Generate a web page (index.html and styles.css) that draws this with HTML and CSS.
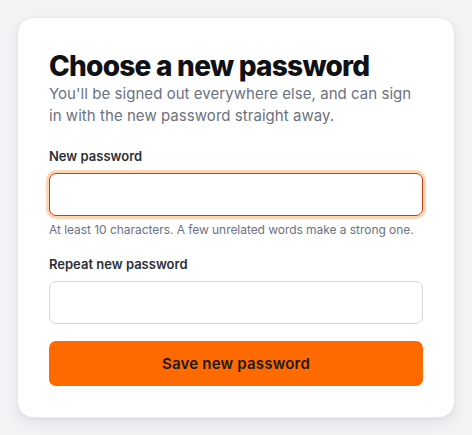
FILE: index.html
```html
<!DOCTYPE html>
<html lang="en">
<head>
<meta charset="utf-8">
<title>Choose a new password</title>
<link rel="stylesheet" href="styles.css">
</head>
<body>
<main class="page">
  <form class="card">
    <header class="head">
      <h1 class="title">Choose a new password</h1>
      <p class="lede">You'll be signed out everywhere else, and can sign in with the new password straight away.</p>
    </header>
    <div class="field">
      <label class="label" for="pw">New password</label>
      <input class="input input-focus" id="pw" type="password">
      <p class="hint">At least 10 characters. A few unrelated words make a strong one.</p>
    </div>
    <div class="field">
      <label class="label" for="pw2">Repeat new password</label>
      <input class="input" id="pw2" type="password">
    </div>
    <button class="btn" type="button">Save new password</button>
  </form>
</main>
</body>
</html>
```

FILE: styles.css
```css
* { box-sizing: border-box; }
html, body { margin: 0; padding: 0; }
body {
  background: #f3f4f6;
  font-family: Inter, "Noto Sans", sans-serif;
  color: #111827;
}
.page {
  padding: 17px;
}
.card {
  width: 438px;
  background: #ffffff;
  border: 1px solid #e8e9ed;
  border-radius: 16px;
  box-shadow: 0 6px 16px rgba(17, 24, 39, 0.08), 0 1px 3px rgba(17, 24, 39, 0.05);
  padding: 31px;
  display: flex;
  flex-direction: column;
}
.head { margin-bottom: 20px; }
.title {
  margin: 0;
  font-size: 28px;
  line-height: 34px;
  font-weight: 800;
  letter-spacing: -0.75px;
  color: #0f1115;
}
.lede {
  margin: 0;
  font-size: 15px;
  line-height: 22px;
  letter-spacing: 0.05px;
  color: #6b7280;
}
.field {
  display: flex;
  flex-direction: column;
  margin-bottom: 17px;
}
.label {
  font-size: 13px;
  line-height: 18px;
  font-weight: 600;
  color: #2b2f36;
  margin-bottom: 8px;
}
.input {
  height: 43px;
  border: 1px solid #d4d5dc;
  border-radius: 7px;
  background: #fff;
  font: inherit;
  padding: 0 12px;
  outline: none;
}
.input-focus {
  border-color: #c2410c;
  box-shadow: 0 0 0 3px #fdd6b6;
}
.hint {
  margin: 6px 0 0;
  font-size: 12px;
  line-height: 16px;
  letter-spacing: -0.05px;
  color: #6b7280;
}
.btn {
  height: 45px;
  border: 0;
  border-radius: 7px;
  background: #ff6a00;
  color: #1a1a1a;
  font: inherit;
  font-size: 15px;
  font-weight: 600;
  letter-spacing: 0.2px;
  cursor: pointer;
}
```
